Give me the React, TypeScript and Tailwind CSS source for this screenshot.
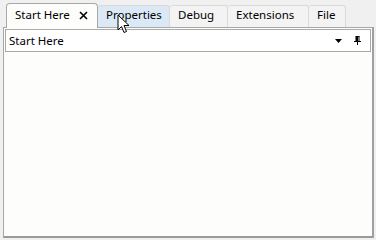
import React from "react";

const tabs = [
  { label: "Properties", w: "w-[72px]", hover: true },
  { label: "Debug", w: "w-[58px]" },
  { label: "Extensions", w: "w-[81px]" },
  { label: "File", w: "w-[37px]" },
];

function Cursor() {
  return (
    <svg className="absolute left-[117px] top-[14px]" width="13" height="20" viewBox="0 0 13 20">
      <path d="M1 1 L1 16 L4.5 12.5 L7 18.5 L9.5 17.5 L7 11.5 L12 11.5 Z" fill="#fff" stroke="#000" strokeWidth="1" strokeLinejoin="miter" />
    </svg>
  );
}

export default function App() {
  return (
    <div className="relative w-[376px] h-[240px] bg-[#f0f0f0] pt-[2px] pl-[3px] pr-[2px] pb-[2px] text-[11.5px] leading-[15px] text-black" style={{ fontFamily: '"Noto Sans", "Open Sans", sans-serif' }}>
      {/* tab strip */}
      <div className="flex items-end h-[25px] pl-[3px]">
        <div className="relative z-10 flex items-start h-[25px] w-[92px] bg-[#fdfdfb] border border-b-0 border-[#a8a8a8] rounded-t-[4px] pl-[8px] pt-[3px] -mb-px">
          <span>Start Here</span>
          <svg className="ml-auto mr-[9px] mt-[4px]" width="9" height="9" viewBox="0 0 9 9">
            <path d="M1 1 L8 8 M8 1 L1 8" stroke="#000" strokeWidth="1.6" />
          </svg>
        </div>
        {tabs.map((t) => (
          <div
            key={t.label}
            className={`flex items-start h-[22px] ${t.w} border-r border-t border-[#dadada] rounded-t-[3px] pl-[8px] pt-[1px] ${t.hover ? "bg-[#dbe8f5]" : "bg-[#f3f3f3]"}`}
          >
            {t.label}
          </div>
        ))}
      </div>
      {/* panel */}
      <div className="h-[211px] bg-[#fdfdfb] border border-[#a8a8a8] border-r-[#a0a0a0] border-b-[#9a9a9a] border-b-2 border-r-2 p-px">
        <div className="flex items-center h-[23px] border border-[#aaaaaa] bg-white pl-[3px] pr-[9px]">
          <span>Start Here</span>
          <svg className="ml-auto" width="7" height="4" viewBox="0 0 7 4">
            <path d="M0 0 L7 0 L3.5 4 Z" fill="#000" />
          </svg>
          <svg className="ml-[12px]" width="7" height="9" viewBox="0 0 7 9">
            <path d="M1.5 0.5 H5.5 M2 0.5 V5 M5 0.5 V5 M0 5.5 H7 M3.5 5.5 V9" stroke="#000" strokeWidth="1" fill="none" />
            <rect x="2" y="1" width="2" height="4" fill="#000" />
          </svg>
        </div>
      </div>
      <Cursor />
    </div>
  );
}
